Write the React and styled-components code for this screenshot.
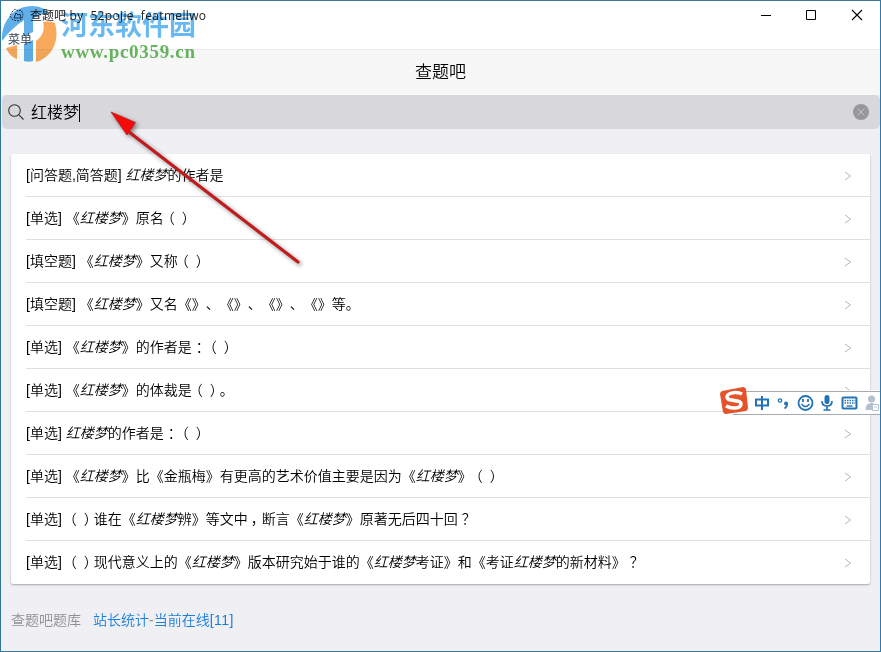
import React, { useState } from 'react';
import styled, { createGlobalStyle } from 'styled-components';

const GlobalStyle = createGlobalStyle`
  *{box-sizing:border-box;}
  body{margin:0;font-family:"Liberation Sans","Noto Sans CJK SC",sans-serif;color:#000;text-spacing-trim:space-all;}
  button{background:transparent;border:none;padding:0;font:inherit;}
  svg{display:block;}
`;

// *text* is the highlighted keyword
const questions = [
  '[问答题,简答题] *红楼梦*的作者是',
  '[单选] 《*红楼梦*》原名（）',
  '[填空题] 《*红楼梦*》又称（）',
  '[填空题] 《*红楼梦*》又名《》、《》、《》、《》等。',
  '[单选] 《*红楼梦*》的作者是：（）',
  '[单选] 《*红楼梦*》的体裁是（）。',
  '[单选] *红楼梦*的作者是：（）',
  '[单选] 《*红楼梦*》比《金瓶梅》有更高的艺术价值主要是因为《*红楼梦*》（）',
  '[单选] （）谁在《*红楼梦*辨》等文中，断言《*红楼梦*》原著无后四十回？',
  '[单选] （）现代意义上的《*红楼梦*》版本研究始于谁的《*红楼梦*考证》和《考证*红楼梦*的新材料》？',
];

// horizontal shift of the full-width marks inside their cell
const shifts = { '（': -3, '）': 4, '：': 4, '，': 3, '？': 4 };

const Question = ({ text }) =>
  text.split('*').map((part, i) =>
    i % 2 ? (
      <em key={i}>{part}</em>
    ) : (
      part.split(/([（）：，？])/).map((s, j) =>
        shifts[s] ? <Mark key={j} $shift={shifts[s]}>{s}</Mark> : s
      )
    )
  );

const TitleBar = () => (
  <TitleBarWrap>
    <div className='caption'>
      <svg width='16' height='16' viewBox='0 0 16 16' fill='none' stroke='#345' strokeWidth='1'>
        <path d='M3 5l3-3 3 2 3-1 2 4-1 5-4 2-5-1-3-4z' strokeDasharray='2 1' />
        <path d='M5 11l2-5 2 2 2-1 1 4z' />
      </svg>
      <span>查题吧<i> by&nbsp; 52pojie&nbsp; featmellwo</i></span>
      <WindowButtons>
        <button type='button' aria-label='minimize'>
          <svg width='12' height='12' stroke='#000' fill='none'><path d='M1 6.5h10' /></svg>
        </button>
        <button type='button' aria-label='maximize'>
          <svg width='12' height='12' stroke='#000' fill='none'><path d='M1.5 1.5h9v9h-9z' /></svg>
        </button>
        <button type='button' aria-label='close'>
          <svg width='12' height='12' stroke='#000' fill='none'><path d='M1 1l10 10M11 1L1 11' strokeWidth='1.1' /></svg>
        </button>
      </WindowButtons>
    </div>
    <div className='menu'>菜单</div>
  </TitleBarWrap>
);

const Watermark = () => (
  <WatermarkWrap>
    <svg width='60' height='66' viewBox='0 0 60 66'>
      <path d='M1 41C0 21 13 6 31 6c8 0 14 3 18 8-7-1-13 1-17 5v13l-9 4V20C14 26 6 34 1 41z' fill='#4fa6e6' />
      <path d='M2 40C2 28 9 16 20 11l2 10C13 26 6 33 2 40z' fill='#4fa6e6' />
      <path d='M55 28c3 18-8 31-20 34V41c7-5 9-12 7-19 5-1 9 0 12 1z' fill='#f8a04a' />
      <path d='M5 48l11-3v14C11 57 7 53 5 48z' fill='#f8a04a' />
      <path d='M23 44l9-4v21c-3 1-6 1-9 0z' fill='#4fa6e6' />
    </svg>
    <div className='names'>
      <strong>河东软件园</strong>
      <b>www.pc0359.cn</b>
    </div>
  </WatermarkWrap>
);

const InputMethodBar = () => (
  <ImeBar>
    <svg width='161' height='30' viewBox='0 0 161 30' fill='none' stroke='#2474b5'>
      <path d='M14 5h147v24H14z' fill='#fff' stroke='none' />
      <path d='M14 6.500H161M14 29.500H161' stroke='#a6abb0' />
      <path d='M3 6l21-4q2 0 3 2l2 19q0 2-2 3L7 29q-2 0-3-2L1 9q0-2 2-3z' fill='#e4532a' stroke='none' />
      <path d='M23 9C17 6 8 8 8 12c0 5 14 2 14 7 0 5-10 5-15 2' stroke='#fff' strokeWidth='3.500' />
      <path d='M37 14.500h12v6H37zM43 11v14' strokeWidth='2' />
      <circle cx='61' cy='15.500' r='1.700' strokeWidth='1.300' />
      <circle cx='67' cy='18.500' r='2' fill='#2474b5' stroke='none' />
      <path d='M68 18.500q.500 3-2.500 5' strokeWidth='1.800' />
      <circle cx='86.500' cy='18' r='7' strokeWidth='1.800' />
      <path d='M84 14v3M89 14v3' strokeWidth='1.800' />
      <path d='M82.500 19q4 5 8 0' strokeWidth='1.500' />
      <rect x='105.500' y='10' width='5' height='9' rx='2.500' fill='#2474b5' stroke='none' />
      <path d='M103 16q0 5 5 5t5-5M108 21v4M104.500 25h7' strokeWidth='1.700' />
      <rect x='123.500' y='12.500' width='14' height='11' rx='1' strokeWidth='2' />
      <path d='M125.500 15.500h11M125.500 18h11' strokeDasharray='1.500 1' strokeWidth='1.400' />
      <path d='M127.500 21h6' strokeWidth='1.400' />
      <circle cx='152.500' cy='14' r='3.500' fill='#b4c0d0' stroke='none' />
      <path d='M146.500 25q0-7 6-7t6 7z' fill='#b4c0d0' stroke='none' />
      <path d='M153.500 19.500h6v6h-6zM155 22h3' fill='#fff' stroke='#b4c0d0' />
    </svg>
  </ImeBar>
);

const App = () => {
  const [keyword] = useState('红楼梦');

  return (
    <Window>
      <GlobalStyle />
      <TitleBar />
      <Header>查题吧</Header>
      <SearchBar>
        <svg width='16' height='16' viewBox='0 0 16 16' fill='none' stroke='#333' strokeWidth='1.1'>
          <circle cx='6.500' cy='6.500' r='5.800' />
          <path d='M10.700 10.700L15.500 15.500' />
        </svg>
        <p>{keyword}</p>
        <svg width='16' height='16' viewBox='0 0 16 16'>
          <circle cx='8' cy='8' r='8' fill='#98989a' />
          <path d='M4.800 4.800l6.400 6.400M11.200 4.800l-6.400 6.400' stroke='#c8c8cc' />
        </svg>
      </SearchBar>
      <List>
        {questions.map((q) => (
          <Row key={q}>
            <span><Question text={q} /></span>
            <svg width='8' height='10' viewBox='0 0 8 10' fill='none' stroke='#b5b5b9'>
              <path d='M1 1l5.500 4L1 9' />
            </svg>
          </Row>
        ))}
      </List>
      <Footer>
        <span>查题吧题库</span>
        <a>站长统计<i>-</i>当前在线<b>[11]</b></a>
      </Footer>
      <Watermark />
      <Arrow width='210' height='170' viewBox='0 0 210 170'>
        <path d='M28 29L197 159' stroke='#c01c1e' strokeWidth='3.200' strokeLinecap='round' />
        <path d='M10 9L34.500 19.500L26 32z' fill='#f40a08' stroke='#c01c1e' strokeWidth='.800' />
      </Arrow>
      <InputMethodBar />
    </Window>
  );
};

const Window = styled.div`
  position:relative;display:flex;flex-direction:column;width:881px;height:652px;overflow:hidden;
  background:#efeff4;border:1px solid #2c7bb0;border-left-color:#337596;border-top-color:#3f7696;border-bottom-color:#357d99;
`;

const TitleBarWrap = styled.div`
  height:49px;background:#fff;border-bottom:1px solid #ececec;
  font-family:"Open Sans","Noto Sans CJK SC",sans-serif;font-size:12px;
  .caption{display:flex;align-items:center;height:28px;padding-left:8px;}
  .caption>span{margin-left:5px;flex:1;white-space:pre;color:#222;}
  .caption i{font-style:normal;letter-spacing:.34px;}
  .menu{padding-left:7px;line-height:21px;color:#345;}
`;

const WindowButtons = styled.div`
  display:flex;margin-right:1px;
  button{width:45px;height:28px;display:flex;align-items:center;justify-content:center;}
  button:not(:last-child){padding-right:2px;}
`;

const Header = styled.div`
  height:45px;display:flex;align-items:center;justify-content:center;padding-bottom:4px;background:#f7f7f8;font-size:17px;font-weight:350;
`;

const SearchBar = styled.div`
  display:flex;align-items:center;height:34px;margin-left:1px;padding:0 11px 0 6px;
  background:#d8d7dc;border-radius:5px;
  p{margin:1px auto 0 7px;font-size:16px;font-weight:350;line-height:18px;border-right:1px solid #000;}
`;

const List = styled.div`
  flex:none;margin:25px 10px 0;background:#fff;border-radius:2px;box-shadow:0 1px 2px rgba(0,0,0,.3);
`;

const Row = styled.div`
  display:flex;align-items:center;justify-content:space-between;height:43px;margin-left:15px;padding-right:18px;
  font-size:14px;font-weight:350;white-space:nowrap;border-bottom:1px solid #e0e0e2;
  &:last-child{border-color:transparent;}
  >span{padding-bottom:2px;}
  >svg{margin-top:2px;}
`;

const Mark = styled.span`
  margin-left:${({ $shift }) => $shift}px;margin-right:${({ $shift }) => -$shift}px;
`;

const Footer = styled.div`
  display:flex;gap:12px;margin:26px 0 0 10px;line-height:21px;font-size:14px;font-weight:350;color:#8f8f94;
  a{color:#1a7fdc;}
  i{font-style:normal;color:#8f8f94;}
  b{font-weight:350;letter-spacing:.5px;}
`;

const WatermarkWrap = styled.div`
  position:absolute;left:0;top:-1px;display:flex;opacity:.9;mix-blend-mode:multiply;
  .names{display:flex;flex-direction:column;}
  strong{font-family:"Noto Sans CJK SC",sans-serif;font-size:27px;line-height:30px;margin-top:9px;color:#58b0ee;font-weight:700;}
  b{font-family:"Liberation Serif",serif;font-size:19px;line-height:22px;letter-spacing:.7px;margin-top:2px;color:#58b04e;}
`;

const Arrow = styled.svg`
  position:absolute;left:100px;top:102px;filter:drop-shadow(2px 2px 2px rgba(0,0,0,.45));
`;

const ImeBar = styled.div`
  position:absolute;left:718px;top:384px;
`;

export default App;
